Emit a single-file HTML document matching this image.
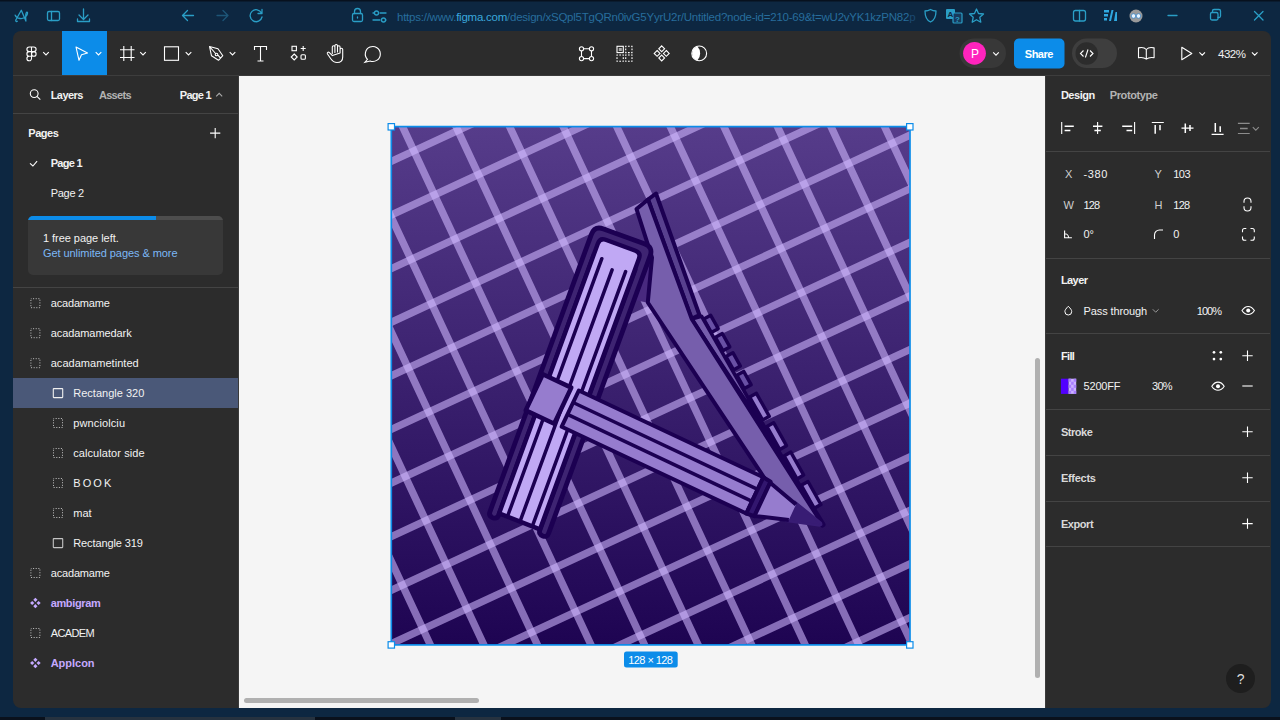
<!DOCTYPE html>
<html lang="en">
<head>
<meta charset="utf-8">
<title>Untitled – Figma</title>
<style>
*{box-sizing:border-box;margin:0;padding:0}
html,body{width:1280px;height:720px;overflow:hidden;background:#0d2741;font-family:"Liberation Sans",sans-serif;font-size:11px;color:#fff}
.abs{position:absolute}
#chrome{position:absolute;left:0;top:0;width:1280px;height:720px;background:linear-gradient(#07111e 0,#07111e 1px,#0d2741 2px,#0d2741 100%)}
#url{position:absolute;left:397px;top:10.500px;font-size:11.500px;color:#276d9c;white-space:nowrap}
#url b{color:#3aa7dc;font-weight:400}
#url i{font-style:normal;color:#1b4a72}
#fig{position:absolute;left:13px;top:31px;width:1257.600px;height:677.300px;background:#2c2c2c;border-radius:8px;overflow:hidden}
#canvas{position:absolute;left:239px;top:76px;width:806px;height:632px;background:#f5f5f5}
.sep{position:absolute;height:1px;background:#444}
.t{position:absolute;white-space:nowrap;line-height:14px;height:14px;color:#f2f2f2;letter-spacing:0.1px}
.b{font-weight:700}
.g{color:#b3b3b3}
.p{color:#c4a9ff;font-weight:700}
svg{position:absolute;overflow:visible}
.ic{stroke:#fff;fill:none;stroke-width:1.1}
.br{stroke:#2a9ec6;fill:none;stroke-width:1.3;stroke-linecap:round;stroke-linejoin:round}
</style>
</head>
<body>

<div id="chrome"></div>
<svg width="1280" height="32" style="left:0;top:0" viewBox="0 0 1280 32">
<path class="br" stroke-width="1.200" d="M17.300 21.300c-1.200.8-2.100-.6-1.200-1.800l5.200-9.200 4.600 10.800M15.200 15.200c1.500 3.600 7.500 4.800 10.800 1.200 1.800-2 1.900-4.600.8-4.200-1.300.5-1.300 4.500-.9 8.800"/>
<rect class="br" x="47.500" y="11.500" width="12" height="9" rx="1.5"/><path class="br" d="M51.500 11.500v9"/>
<path class="br" d="M83.500 9v10M79 15l4.500 4.500 4.500-4.500M77.500 19v2.500h12V19"/>
<path class="br" d="M193.500 15.500h-11M187.500 10.500l-5 5 5 5"/>
<path class="br" style="stroke:#1d5577" d="M217 15.500h11M223 10.500l5 5-5 5"/>
<path class="br" d="M261.500 13a6 6 0 1 0 .5 4M262 9.500v4h-4"/>
<rect class="br" x="352.500" y="13.500" width="10" height="8" rx="1.500"/><path class="br" d="M354.500 13.500v-2a3 3 0 0 1 6 0v2M357.500 17v1"/>
<path class="br" d="M374 13h-1M380 13h6M373 20h7M386 20h0"/><circle class="br" cx="376.500" cy="13" r="2"/><circle class="br" cx="383.500" cy="20" r="2"/>
<path class="br" d="M930.500 9.500c2 1.200 4 1.500 5.500 1.500 0 5-1 9-5.500 11-4.500-2-5.500-6-5.500-11 1.500 0 3.500-.3 5.500-1.500z"/>
<rect x="946" y="9" width="9" height="10" rx="1" fill="#2a9ec6"/><rect x="953" y="13" width="9" height="10" rx="1" fill="#173a5c" stroke="#2a9ec6" stroke-width="1.200"/>
<text x="947.500" y="17" font-size="8" font-weight="700" fill="#0f2742" font-family="Liberation Sans, sans-serif">A</text><text x="955" y="21.500" font-size="8" font-weight="700" fill="#2a9ec6" font-family="Liberation Sans, sans-serif">?</text>
<path class="br" d="M976.500 9l2 4.500 5 .5-3.700 3.300 1 4.900-4.300-2.500-4.300 2.500 1-4.900-3.700-3.300 5-.5z"/>
<rect class="br" x="1073.500" y="10.500" width="12" height="10.500" rx="2"/><path class="br" d="M1079.500 10.500v10.500"/>
<path d="M1104 10h5v2.500h-5zM1104 14h4v2.500h-4zM1104 18h3v2.500h-3zM1111.500 10h2l-2.500 11h-2zM1115.500 12h1.500v9h-3z" fill="#2fa8e0"/>
<circle cx="1136" cy="16" r="6.500" fill="#9a9a9a"/><circle cx="1133.500" cy="16" r="2.300" fill="#e8f4ff" stroke="#3a86c8" stroke-width=".8"/><circle cx="1138.500" cy="16" r="2.300" fill="#e8f4ff" stroke="#3a86c8" stroke-width=".8"/>
<path class="br" d="M1168 15.500h9"/>
<rect class="br" x="1210.500" y="12.500" width="7.500" height="7.500" rx="1.500"/><path class="br" d="M1212.500 12v-1a1.500 1.500 0 0 1 1.500-1.500h5a1.500 1.500 0 0 1 1.500 1.500v5a1.500 1.500 0 0 1-1.500 1.500h-1"/>
<path class="br" d="M1254.500 11.500l8.500 8.500M1263 11.500l-8.500 8.500"/>
</svg>
<div id="url" style="letter-spacing:-0.237px">https://www.<b>figma.com</b>/design/xSQpl5TgQRn0ivG5YyrU2r/Untitled?node-id=210-69&amp;t=wU2vYK1kzPN82<i>p</i></div>
<div class="abs" style="left:0;top:717px;width:1280px;height:3px;background:#0a111c"></div>
<div class="abs" style="left:45px;top:717px;width:270px;height:3px;background:#26323f"></div>
<div class="abs" style="left:455px;top:717px;width:46px;height:3px;background:#26323f"></div>
<div id="fig"></div>
<div id="canvas"></div>
<div class="abs" style="left:62px;top:31px;width:45px;height:44px;background:#0c8ce9"></div>
<div class="sep" style="left:13px;top:75px;width:226px;background:#3d3d3d"></div>
<div class="sep" style="left:1045px;top:75px;width:225px;background:#3d3d3d"></div>
<div class="sep" style="left:239px;top:75px;width:806px;background:#3a3a3a"></div>
<svg width="1280" height="80" style="left:0;top:0" viewBox="0 0 1280 80">
<g class="ic" stroke-width="1.200"><path d="M31.500 47h-2.300a2.300 2.300 0 0 0 0 4.600h2.300zM31.500 51.600h-2.300a2.300 2.300 0 0 0 0 4.600h2.300zM31.500 56.200h-2.300a2.300 2.300 0 1 0 2.300 2.300zM31.500 47h2.300a2.300 2.300 0 0 1 0 4.600h-2.300z"/><circle cx="33.800" cy="53.900" r="2.300"/></g>
<path d="M43.2 52.1l2.800 2.800 2.800-2.800" stroke="#fff" stroke-width="1.1" fill="none"/>
<path class="ic" stroke-linejoin="round" stroke-width="1.200" d="M76 47l11.500 6-6 1.800-2.500 5.500z"/><path d="M95.7 52.1l2.800 2.800 2.800-2.800" stroke="#fff" stroke-width="1.1" fill="none"/>
<path class="ic" stroke-width="1.200" d="M123.800 46v15M131.200 46v15M120 49.700h14.500M120 57.500h14.500"/><path d="M140.2 52.1l2.800 2.800 2.800-2.800" stroke="#fff" stroke-width="1.1" fill="none"/>
<rect class="ic" stroke-width="1.200" x="164.500" y="46.800" width="14" height="13.500"/><path d="M185.7 52.1l2.800 2.800 2.800-2.800" stroke="#fff" stroke-width="1.1" fill="none"/>
<path class="ic" stroke-linejoin="round" d="M209.500 46.500l8.500 2.200 4.800 7-4.300 4.600-7-4.500zM209.500 46.500l6.500 7.500M220.500 58.200l-2.500-3"/><circle class="ic" cx="216.500" cy="54.500" r="1.300"/><path d="M229.7 52.1l2.800 2.800 2.800-2.800" stroke="#fff" stroke-width="1.1" fill="none"/>
<path class="ic" stroke-width="1.500" d="M254.500 50v-3.500h12V50M260.500 46.500v14.500M257.500 61h6"/>
<rect class="ic" x="292" y="46.300" width="4.400" height="4.400"/><path class="ic" d="M303.200 46v5M300.700 48.500h5M294.200 54l3 3-3 3-3-3z"/><rect class="ic" x="301" y="54.800" width="4.400" height="4.400" rx="1"/>
<path class="ic" stroke-linejoin="round" stroke-linecap="round" stroke-width="1.200" d="M332.300 53.500v-6.500a1.300 1.300 0 0 1 2.600 0v5.500M334.900 52v-6.200a1.300 1.300 0 0 1 2.600 0v6.200M337.500 52v-5a1.300 1.300 0 0 1 2.600 0v5.500M340.100 53v-3.500a1.300 1.300 0 0 1 2.600 0v7.500c0 3.500-2.200 5.500-5.700 5.500-3 0-4.500-1.300-6.200-3.800l-3.300-4.700c-.8-1.300.8-2.500 1.900-1.400l3 3z"/>
<path class="ic" stroke-width="1.200" d="M367.500 59.300a7.500 7.500 0 1 1 2.600 1.700l-5.200 1.200z"/>
<path class="ic" stroke-width="1.200" d="M581.500 51v5.500M591.500 51v5.500M583.700 48.800h5.600M583.700 58.600h5.600"/>
<circle class="ic" stroke-width="1.200" cx="581.5" cy="48.8" r="2.100"/>
<circle class="ic" stroke-width="1.200" cx="591.5" cy="48.8" r="2.100"/>
<circle class="ic" stroke-width="1.200" cx="581.5" cy="58.6" r="2.100"/>
<circle class="ic" stroke-width="1.200" cx="591.5" cy="58.6" r="2.100"/>
<rect class="ic" x="617" y="46.300" width="6.300" height="6.300"/><rect x="618.800" y="48" width="3" height="3" fill="#aaa"/>
<rect class="ic" stroke-dasharray="1.700 1.450" stroke-dashoffset="0.850" x="625.7" y="46.3" width="6.300" height="6.300"/>
<rect class="ic" stroke-dasharray="1.700 1.450" stroke-dashoffset="0.850" x="617" y="55" width="6.300" height="6.300"/>
<rect class="ic" stroke-dasharray="1.700 1.450" stroke-dashoffset="0.850" x="625.7" y="55" width="6.300" height="6.300"/>
<path class="ic" d="M661.7 45.9l2.900 2.900-2.900 2.900-2.900-2.900z"/>
<path class="ic" d="M657.1 50.5l2.900 2.900-2.900 2.900-2.900-2.900z"/>
<path class="ic" d="M666.3000000000001 50.5l2.900 2.900-2.900 2.900-2.900-2.900z"/>
<path class="ic" d="M661.7 55.1l2.900 2.900-2.900 2.900-2.900-2.900z"/>
<circle class="ic" stroke-width="1.200" cx="699.200" cy="53.400" r="7.400"/><path d="M697.500 46.600a7 7 0 0 0 0 13.600a10 10 0 0 0 0-13.600z" fill="#fff"/>
<rect x="959.500" y="38.500" width="46.500" height="29.500" rx="14.700" fill="#383838"/><circle cx="974.500" cy="53.300" r="11.400" fill="#ff24bd"/><path d="M993.2 52.300000000000004l2.800 2.800 2.800-2.800" stroke="#fff" stroke-width="1.1" fill="none"/>
<rect x="1014" y="38.500" width="50.500" height="30" rx="5" fill="#0c8ce9"/>
<rect x="1072" y="38.500" width="45" height="29.500" rx="14.700" fill="#3e3e3e"/><circle cx="1086.700" cy="53.500" r="11.200" fill="#2c2c2c"/>
<path class="ic" stroke-width="1.200" d="M1083.500 50.500l-3 3 3 3M1090 50.500l3 3-3 3M1088 49.500l-2.600 8"/>
<path class="ic" stroke-width="1.200" stroke-linejoin="round" d="M1146.300 49.500c-1.500-1.700-5-2.300-7.800-1.600v9.800c2.800-.5 6 0 7.800 1.500 1.800-1.500 5-2 7.800-1.500v-9.800c-2.800-.7-6.300-.1-7.800 1.600zM1146.300 49.500v9.700"/>
<path class="ic" stroke-width="1.200" stroke-linejoin="round" d="M1181.800 47.300l10 6.200-10 6.200z"/><path d="M1199.4 52.4l2.800 2.800 2.800-2.800" stroke="#fff" stroke-width="1.1" fill="none"/>
<path d="M1251.9 52.4l2.800 2.800 2.800-2.800" stroke="#fff" stroke-width="1.1" fill="none"/>
</svg>
<div class="t " style="left:970.9px;top:46.5px;font-size:12px;color:#fff;letter-spacing:0">P</div>
<div class="t b" style="left:1024.8px;top:46.5px;font-size:11px;letter-spacing:-0.493px;color:#fff">Share</div>
<div class="t " style="left:1218.1px;top:46.6px;font-size:11.5px;letter-spacing:-0.537px;">432%</div>
<div class="sep" style="left:13px;top:113px;width:226px;background:#444"></div>
<div class="sep" style="left:13px;top:287px;width:226px;background:#444"></div>
<div class="abs" style="left:238px;top:76px;width:1px;height:632px;background:#3a3a3a"></div>
<div class="t b" style="left:50.7px;top:88px;font-size:11px;letter-spacing:-0.554px;">Layers</div>
<div class="t b g" style="left:98.9px;top:88px;font-size:11px;letter-spacing:-0.675px;">Assets</div>
<div class="t b" style="left:179.8px;top:88px;font-size:11px;letter-spacing:-0.733px;font-weight:700">Page 1</div>
<div class="t b" style="left:28.3px;top:126.30000000000001px;font-size:11px;letter-spacing:-0.477px;">Pages</div>
<div class="t b" style="left:50.7px;top:156.3px;font-size:11px;letter-spacing:-0.693px;">Page 1</div>
<div class="t " style="left:50.7px;top:186.2px;font-size:11px;letter-spacing:-0.272px;">Page 2</div>
<div class="abs" style="left:28px;top:216px;width:194.500px;height:59px;background:#383838;border-radius:5px;overflow:hidden"><div style="height:3.500px;background:#4d4d4d"><div style="width:128px;height:3.500px;background:#0c8ce9"></div></div></div>
<div class="t " style="left:43px;top:231.2px;font-size:11px;letter-spacing:-0.046px;">1 free page left.</div>
<div class="t " style="left:43px;top:246.2px;font-size:11px;letter-spacing:-0.074px;color:#7cb7f5">Get unlimited pages &amp; more</div>
<div class="abs" style="left:13px;top:378px;width:225px;height:29.500px;background:#4a5878"></div>
<svg width="240" height="720" style="left:0;top:0" viewBox="0 0 240 720">
<circle class="ic" stroke-width="1.200" cx="34.200" cy="93.600" r="3.900"/><path class="ic" stroke-width="1.300" d="M37 96.400l3.300 3.200"/>
<path d="M216.200 96.300l3-3 3 3" stroke="#aaa" stroke-width="1.100" fill="none"/>
<path class="ic" stroke-width="1.100" d="M215.200 128v10.200M210.100 133.100h10.200"/>
<path class="ic" stroke-width="1.600" d="M30 163.300l2.900 2.700 4.200-4.900"/>
<rect x="30.9" y="298.7" width="9" height="9" fill="none" stroke="#b8b8b8" stroke-width="1" stroke-dasharray="1.100 1.530" stroke-dashoffset="0.5"/>
<rect x="30.9" y="328.7" width="9" height="9" fill="none" stroke="#b8b8b8" stroke-width="1" stroke-dasharray="1.100 1.530" stroke-dashoffset="0.5"/>
<rect x="30.9" y="358.7" width="9" height="9" fill="none" stroke="#b8b8b8" stroke-width="1" stroke-dasharray="1.100 1.530" stroke-dashoffset="0.5"/>
<rect x="53.3" y="388.6" width="9.400" height="9" rx="0.5" fill="none" stroke="#f0f0f0" stroke-width="1.100"/>
<rect x="53.5" y="418.5" width="9" height="9" fill="none" stroke="#b8b8b8" stroke-width="1" stroke-dasharray="1.100 1.530" stroke-dashoffset="0.5"/>
<rect x="53.5" y="448.5" width="9" height="9" fill="none" stroke="#b8b8b8" stroke-width="1" stroke-dasharray="1.100 1.530" stroke-dashoffset="0.5"/>
<rect x="53.5" y="478.5" width="9" height="9" fill="none" stroke="#b8b8b8" stroke-width="1" stroke-dasharray="1.100 1.530" stroke-dashoffset="0.5"/>
<rect x="53.5" y="508.5" width="9" height="9" fill="none" stroke="#b8b8b8" stroke-width="1" stroke-dasharray="1.100 1.530" stroke-dashoffset="0.5"/>
<rect x="53.3" y="538.6" width="9.400" height="9" rx="0.5" fill="none" stroke="#c4c4c4" stroke-width="1.100"/>
<rect x="30.9" y="568.5" width="9" height="9" fill="none" stroke="#b8b8b8" stroke-width="1" stroke-dasharray="1.100 1.530" stroke-dashoffset="0.5"/>
<path d="M35.4 597.6999999999999l2.100 2.100-2.100 2.100-2.100-2.100z" fill="#c4a9ff"/>
<path d="M32.199999999999996 600.9l2.100 2.100-2.100 2.100-2.100-2.100z" fill="#c4a9ff"/>
<path d="M38.6 600.9l2.100 2.100-2.100 2.100-2.100-2.100z" fill="#c4a9ff"/>
<path d="M35.4 604.1l2.100 2.100-2.100 2.100-2.100-2.100z" fill="#c4a9ff"/>
<rect x="30.9" y="628.5" width="9" height="9" fill="none" stroke="#b8b8b8" stroke-width="1" stroke-dasharray="1.100 1.530" stroke-dashoffset="0.5"/>
<path d="M35.4 657.6999999999999l2.100 2.100-2.100 2.100-2.100-2.100z" fill="#c4a9ff"/>
<path d="M32.199999999999996 660.9l2.100 2.100-2.100 2.100-2.100-2.100z" fill="#c4a9ff"/>
<path d="M38.6 660.9l2.100 2.100-2.100 2.100-2.100-2.100z" fill="#c4a9ff"/>
<path d="M35.4 664.1l2.100 2.100-2.100 2.100-2.100-2.100z" fill="#c4a9ff"/>
</svg>
<div class="t " style="left:50.7px;top:296.2px;font-size:11px;letter-spacing:-0.166px;">acadamame</div>
<div class="t " style="left:50.7px;top:326.2px;font-size:11px;letter-spacing:-0.077px;">acadamamedark</div>
<div class="t " style="left:50.7px;top:356.2px;font-size:11px;letter-spacing:0.040px;">acadamametinted</div>
<div class="t " style="left:73.3px;top:386.0px;font-size:11px;letter-spacing:0.005px;">Rectangle 320</div>
<div class="t " style="left:73.3px;top:416.0px;font-size:11px;letter-spacing:0.106px;">pwnciolciu</div>
<div class="t " style="left:73.3px;top:446.0px;font-size:11px;letter-spacing:0.064px;">calculator side</div>
<div class="t " style="left:73.3px;top:476.0px;font-size:11px;letter-spacing:-0.493px;">B O O K</div>
<div class="t " style="left:73.3px;top:506.0px;font-size:11px;letter-spacing:-0.068px;">mat</div>
<div class="t " style="left:73.3px;top:536.0px;font-size:11px;letter-spacing:-0.120px;">Rectangle 319</div>
<div class="t " style="left:50.7px;top:566.0px;font-size:11px;letter-spacing:-0.166px;">acadamame</div>
<div class="t p" style="left:50.7px;top:596.0px;font-size:11px;letter-spacing:-0.367px;">ambigram</div>
<div class="t " style="left:50.7px;top:626.0px;font-size:11px;letter-spacing:-0.633px;">ACADEM</div>
<div class="t p" style="left:50.7px;top:656.0px;font-size:11px;letter-spacing:-0.015px;">AppIcon</div>
<div class="abs" style="left:244px;top:697.500px;width:234.500px;height:5.500px;border-radius:3px;background:#b0b0b0"></div>
<div class="abs" style="left:1034.800px;top:358px;width:5px;height:320px;border-radius:3px;background:#b0b0b0"></div>
<div class="abs" style="left:1045px;top:76px;width:1px;height:632px;background:#3a3a3a"></div>
<div class="sep" style="left:1046px;top:151px;width:224px;background:#444"></div>
<div class="sep" style="left:1046px;top:257.5px;width:224px;background:#444"></div>
<div class="sep" style="left:1046px;top:333px;width:224px;background:#444"></div>
<div class="sep" style="left:1046px;top:409px;width:224px;background:#444"></div>
<div class="sep" style="left:1046px;top:454.7px;width:224px;background:#444"></div>
<div class="sep" style="left:1046px;top:500.6px;width:224px;background:#444"></div>
<div class="sep" style="left:1046px;top:546.4px;width:224px;background:#444"></div>
<div class="t b" style="left:1060.9px;top:88px;font-size:11px;letter-spacing:-0.474px;">Design</div>
<div class="t b g" style="left:1109.7px;top:88px;font-size:11px;letter-spacing:-0.379px;">Prototype</div>
<div class="t g" style="left:1065px;top:167.4px;font-size:11px;color:#cfcfcf">X</div>
<div class="t " style="left:1083.6px;top:167.4px;font-size:11px;letter-spacing:0.562px;">-380</div>
<div class="t g" style="left:1154.6px;top:167.4px;font-size:11px;color:#cfcfcf">Y</div>
<div class="t " style="left:1173.3px;top:167.4px;font-size:11px;letter-spacing:-0.576px;">103</div>
<div class="t g" style="left:1063.5px;top:197.5px;font-size:11px;letter-spacing:-1.383px;color:#cfcfcf">W</div>
<div class="t " style="left:1083.6px;top:197.5px;font-size:11px;letter-spacing:-0.876px;">128</div>
<div class="t g" style="left:1154.6px;top:197.5px;font-size:11px;color:#cfcfcf">H</div>
<div class="t " style="left:1173.3px;top:197.5px;font-size:11px;letter-spacing:-0.726px;">128</div>
<div class="t " style="left:1083.6px;top:227.4px;font-size:11px;letter-spacing:-0.116px;">0°</div>
<div class="t " style="left:1173.3px;top:227.4px;font-size:11px;">0</div>
<div class="t b" style="left:1060.9px;top:273.3px;font-size:11px;letter-spacing:-0.563px;">Layer</div>
<div class="t " style="left:1083.6px;top:303.5px;font-size:11px;letter-spacing:-0.129px;">Pass through</div>
<div class="t " style="left:1196.8px;top:303.5px;font-size:11px;letter-spacing:-0.978px;">100%</div>
<div class="t b" style="left:1060.9px;top:349.3px;font-size:11px;letter-spacing:-0.629px;">Fill</div>
<div class="t " style="left:1083.6px;top:379.2px;font-size:11px;letter-spacing:-0.201px;">5200FF</div>
<div class="t " style="left:1152px;top:379.2px;font-size:11px;letter-spacing:-0.708px;">30%</div>
<div class="t b" style="left:1060.9px;top:425.2px;font-size:11px;letter-spacing:-0.467px;color:#d9d9d9">Stroke</div>
<div class="t b" style="left:1060.9px;top:471.1px;font-size:11px;letter-spacing:-0.263px;color:#d9d9d9">Effects</div>
<div class="t b" style="left:1060.9px;top:517px;font-size:11px;letter-spacing:-0.427px;color:#d9d9d9">Export</div>
<svg width="1280" height="720" style="left:0;top:0" viewBox="0 0 1280 720">
<g stroke="#fff" fill="none" stroke-width="1.100"><path d="M1061.700 122v12M1097.600 122v12M1134.600 122v12M1151.800 122.500h12M1181.500 128.100h12M1211.600 134.400h12"/></g>
<g stroke="#fff" fill="none" stroke-width="1.500"><path d="M1064.600 126.300h9.200M1064.600 130.600h5.800M1093 126.300h9.400M1094.400 130.600h6.400M1122.200 126.300h10M1126.500 130.600h5.700M1155.200 125h0v8.700M1160 125v5.300M1185.300 123.400v9.500M1190 125.100v6M1215.300 122.900v9.100M1220.200 126.300v5.700"/></g>
<g stroke="#8c8c8c" fill="none" stroke-width="1.100"><path d="M1237.900 123.400h11.800M1237.900 133.500h11.800"/><path stroke-width="1.500" d="M1240 128.500h7.700"/><path d="M1252.800 127.200l3 3 3-3"/></g>
<g stroke="#fff" fill="none" stroke-width="1.100"><path d="M1244 202.800v-1.300a3.500 3.500 0 0 1 7 0v1.300M1244 206.200v1.300a3.500 3.500 0 0 0 7 0v-1.300"/></g>
<path stroke="#fff" fill="none" stroke-width="1.100" d="M1064.600 230.500v7.300h7.300M1064.600 233.800a4 4 0 0 1 4 4" stroke="#cfcfcf"/>
<path stroke="#fff" fill="none" stroke-width="1.100" d="M1154.500 239v-4a5 5 0 0 1 5-5h3.500" stroke="#cfcfcf"/>
<g stroke="#fff" fill="none" stroke-width="1.100"><path d="M1242.500 232.300v-1.800a2 2 0 0 1 2-2h1.800M1250.500 228.500h1.800a2 2 0 0 1 2 2v1.800M1254.300 236.500v1.800a2 2 0 0 1-2 2h-1.800M1246.300 240.300h-1.800a2 2 0 0 1-2-2v-1.800"/></g>
<path stroke="#fff" fill="none" stroke-width="1" stroke="#cfcfcf" d="M1068.300 306.300c2.300 2.300 3.400 3.700 3.400 5.300a3.400 3.400 0 0 1-6.800 0c0-1.600 1.100-3 3.400-5.300z"/>
<path d="M1152.800 309.300l2.900 2.900 2.900-2.900" stroke="#9a9a9a" stroke-width="1" fill="none"/>
<path stroke="#fff" fill="none" stroke-width="1.100" d="M1242.0 310.5c3.500-5.400 8.900-5.400 12.400 0c-3.500 5.400-8.900 5.400-12.400 0z"/><circle cx="1248.2" cy="310.5" r="2" fill="#fff"/>
<path stroke="#fff" fill="none" stroke-width="1.100" d="M1211.8 386.2c3.500-5.400 8.900-5.400 12.400 0c-3.500 5.400-8.900 5.400-12.400 0z"/><circle cx="1218" cy="386.2" r="2" fill="#fff"/>
<path stroke="#fff" fill="none" stroke-width="1.100" d="M1247.5 350.5v10.400M1242.3 355.7h10.400"/>
<path stroke="#fff" fill="none" stroke-width="1.100" d="M1247.5 426.6v10.400M1242.3 431.8h10.400"/>
<path stroke="#fff" fill="none" stroke-width="1.100" d="M1247.5 472.5v10.400M1242.3 477.7h10.400"/>
<path stroke="#fff" fill="none" stroke-width="1.100" d="M1247.5 518.4v10.400M1242.3 523.6h10.400"/>
<path stroke="#fff" fill="none" stroke-width="1.100" d="M1242.300 386h10.400"/>
<circle cx="1214.0" cy="352.3" r="1.350" fill="#fff"/>
<circle cx="1214.0" cy="359.09999999999997" r="1.350" fill="#fff"/>
<circle cx="1220.8000000000002" cy="352.3" r="1.350" fill="#fff"/>
<circle cx="1220.8000000000002" cy="359.09999999999997" r="1.350" fill="#fff"/>
<rect x="1060.900" y="378.700" width="7.700" height="15.200" fill="#5200ff"/><rect x="1068.600" y="378.700" width="7.600" height="15.200" fill="#cbb2ff"/>
<rect x="1068.60" y="378.70" width="2.540" height="3.040" fill="#a87dff"/>
<rect x="1068.60" y="384.78" width="2.540" height="3.040" fill="#a87dff"/>
<rect x="1068.60" y="390.86" width="2.540" height="3.040" fill="#a87dff"/>
<rect x="1071.14" y="381.74" width="2.540" height="3.040" fill="#a87dff"/>
<rect x="1071.14" y="387.82" width="2.540" height="3.040" fill="#a87dff"/>
<rect x="1073.68" y="378.70" width="2.540" height="3.040" fill="#a87dff"/>
<rect x="1073.68" y="384.78" width="2.540" height="3.040" fill="#a87dff"/>
<rect x="1073.68" y="390.86" width="2.540" height="3.040" fill="#a87dff"/>
<circle cx="1240.500" cy="678.500" r="14.500" fill="#1e1e1e"/>
</svg>
<div class="t " style="left:1236.8px;top:672px;font-size:14px;color:#dcdcdc">?</div>
<svg width="1280" height="720" style="left:0;top:0" viewBox="0 0 1280 720">
<defs><linearGradient id="bg" x1="0" y1="0" x2="0" y2="1"><stop offset="0" stop-color="#563c8a"/><stop offset="1" stop-color="#1e0452"/></linearGradient>
<clipPath id="ac"><rect x="391" y="127" width="519" height="518"/></clipPath></defs>
<rect x="391" y="127" width="519" height="518" fill="url(#bg)"/>
<g clip-path="url(#ac)">
<path d="M72.00 107L332.59 665M125.56 107L386.15 665M179.12 107L439.71 665M232.68 107L493.27 665M286.24 107L546.83 665M339.80 107L600.39 665M393.36 107L653.95 665M446.92 107L707.51 665M500.48 107L761.07 665M554.04 107L814.63 665M607.60 107L868.19 665M661.16 107L921.75 665M714.72 107L975.31 665M768.28 107L1028.87 665M821.84 107L1082.43 665M875.40 107L1135.99 665M928.96 107L1189.55 665" stroke="rgb(208,184,255)" stroke-opacity="0.58" stroke-width="7.4" fill="none"/>
<path d="M371 117.21L930 -142.16M371 170.81L930 -88.56M371 224.41L930 -34.96M371 278.01L930 18.64M371 331.61L930 72.24M371 385.21L930 125.84M371 438.81L930 179.44M371 492.41L930 233.04M371 546.01L930 286.64M371 599.61L930 340.24M371 653.21L930 393.84M371 706.81L930 447.44M371 760.41L930 501.04M371 814.01L930 554.64M371 867.61L930 608.24M371 921.21L930 661.84" stroke="rgb(208,184,255)" stroke-opacity="0.58" stroke-width="7.4" fill="none"/>
<path d="M648.0 199.5L656.0 193.5L699.4 315.0L691.7 318.9Z" fill="#58408e" stroke="#1c0052" stroke-width="4" stroke-linejoin="round" />
<path d="M703.8 319.1L710.7 315.3L718.2 328.7L711.3 332.5Z" fill="#6950a5" stroke="#1c0052" stroke-width="3.4" stroke-linejoin="round" />
<path d="M715.4 337.3L722.3 333.5L729.8 346.9L722.9 350.7Z" fill="#6950a5" stroke="#1c0052" stroke-width="3.4" stroke-linejoin="round" />
<path d="M726.0 356.5L732.9 352.7L740.4 366.1L733.5 369.9Z" fill="#6950a5" stroke="#1c0052" stroke-width="3.4" stroke-linejoin="round" />
<path d="M736.8 375.2L743.7 371.4L751.2 384.8L744.3 388.6Z" fill="#6950a5" stroke="#1c0052" stroke-width="3.4" stroke-linejoin="round" />
<path d="M749.7 397.1L756.4 393.3L769.3 416.3L762.6 420.1Z" fill="#967cce" stroke="#1c0052" stroke-width="3.4" stroke-linejoin="round" />
<path d="M766.9 426.5L773.6 422.7L786.5 445.7L779.8 449.5Z" fill="#967cce" stroke="#1c0052" stroke-width="3.4" stroke-linejoin="round" />
<path d="M784.1 455.9L790.8 452.1L803.7 475.1L797.0 478.9Z" fill="#967cce" stroke="#1c0052" stroke-width="3.4" stroke-linejoin="round" />
<path d="M801.3 485.3L808.0 481.5L820.9 504.5L814.2 508.3Z" fill="#967cce" stroke="#1c0052" stroke-width="3.4" stroke-linejoin="round" />
<path d="M691.7 318.9L701.5 316.2L776.0 447.0Z" fill="#765eac" stroke="#1c0052" stroke-width="3.6" stroke-linejoin="round" />
<path d="M774.500 446.500L822.5 524.5" stroke="#1c0052" stroke-width="6" stroke-linecap="round" fill="none"/>
<path d="M652.0 257.5L647.0 302.5L634.0 300.0L646.0 258.0Z" fill="#48297f" stroke="#1c0052" stroke-width="0" stroke-linejoin="round" />
<path d="M636.5 209.0L648.0 199.5L691.7 318.9L822.5 524.5L778.0 502.0L765.7 480.0L647.8 302.5L652.0 257.5Z" fill="#765eac" stroke="#1c0052" stroke-width="4" stroke-linejoin="round" />
<path d="M 490.0 511.6 L 591.3 234.6 Q 594.6 225.6 603.6 228.9 L 644.4 243.8 Q 653.4 247.1 650.1 256.1 L 548.7 533.1 Q 547.1 537.6 542.7 535.9 Q 538.3 534.3 539.9 529.9 L 635.1 269.8 L 594.0 254.7 L 498.8 514.9 Q 497.2 519.3 492.7 517.7 Q 488.3 516.0 490.0 511.6 Z" fill="#3e2472" stroke="#1c0052" stroke-width="4.800" stroke-linejoin="round"/>
<path d="M 499.1 513.4 L 597.9 243.4 Q 600.0 237.8 605.6 239.8 L 635.5 250.7 Q 641.1 252.8 639.0 258.4 L 539.9 529.4 Z" fill="#c0a8f4" stroke="#1c0052" stroke-width="4.400" stroke-linejoin="round"/>
<path d="M601.8 258.7L508.0 515.0" stroke="#1c0052" stroke-width="3.5" stroke-linecap="round" fill="none"/>
<path d="M612.1 269.9L520.7 519.7" stroke="#1c0052" stroke-width="3.5" stroke-linecap="round" fill="none"/>
<path d="M625.6 271.6L533.1 524.2" stroke="#1c0052" stroke-width="3.5" stroke-linecap="round" fill="none"/>
<path d="M542.8 374.2L571.3 387.6L554.2 423.8L525.7 410.4Z" fill="#967cce" stroke="#1c0052" stroke-width="4.5" stroke-linejoin="round" />
<path d="M578.8 390.5L763.3 477.3L746.3 513.5L561.7 426.7Z" fill="#967cce" stroke="#1c0052" stroke-width="4" stroke-linejoin="round" />
<path d="M573.1 402.5L757.7 489.4" stroke="#1c0052" stroke-width="3.500" fill="none"/>
<path d="M567.5 414.4L752.1 501.3" stroke="#1c0052" stroke-width="3.500" fill="none"/>
<path d="M763.3 477.3L770.6 481.8L754.4 516.2L746.3 513.5Z" fill="#32166e" stroke="#1c0052" stroke-width="4" stroke-linejoin="round" />
<path d="M794.9 501.9L820.9 523.0L821.2 524.6L819.7 525.4L786.0 520.8Z" fill="#381c74" stroke="#381c74" stroke-width="2.5" stroke-linejoin="round" />
<path d="M770.2 482.7L796.0 504.6L788.8 519.9L754.5 516.0Z" fill="#967cce" stroke="#1c0052" stroke-width="0" stroke-linejoin="round" />
<path d="M796.0 504.6L770.2 482.7L754.5 516.0L788.8 519.9" fill="none" stroke="#1c0052" stroke-width="4" stroke-linejoin="round"/>
</g>
<rect x="391.300" y="126.600" width="518.700" height="518.300" fill="none" stroke="#0c8ce9" stroke-width="1.700"/>
<rect x="388.1" y="123.6" width="6.400" height="6.400" fill="#fff" stroke="#0c8ce9" stroke-width="1.200"/>
<rect x="906.5999999999999" y="123.6" width="6.400" height="6.400" fill="#fff" stroke="#0c8ce9" stroke-width="1.200"/>
<rect x="388.1" y="641.6999999999999" width="6.400" height="6.400" fill="#fff" stroke="#0c8ce9" stroke-width="1.200"/>
<rect x="906.5999999999999" y="641.6999999999999" width="6.400" height="6.400" fill="#fff" stroke="#0c8ce9" stroke-width="1.200"/>
<rect x="624" y="651.500" width="53.700" height="16" rx="2.500" fill="#0c8ce9"/>
</svg>
<div class="t " style="left:628.3px;top:652.8px;font-size:11px;letter-spacing:-0.580px;color:#fff">128 × 128</div>
</body></html>
